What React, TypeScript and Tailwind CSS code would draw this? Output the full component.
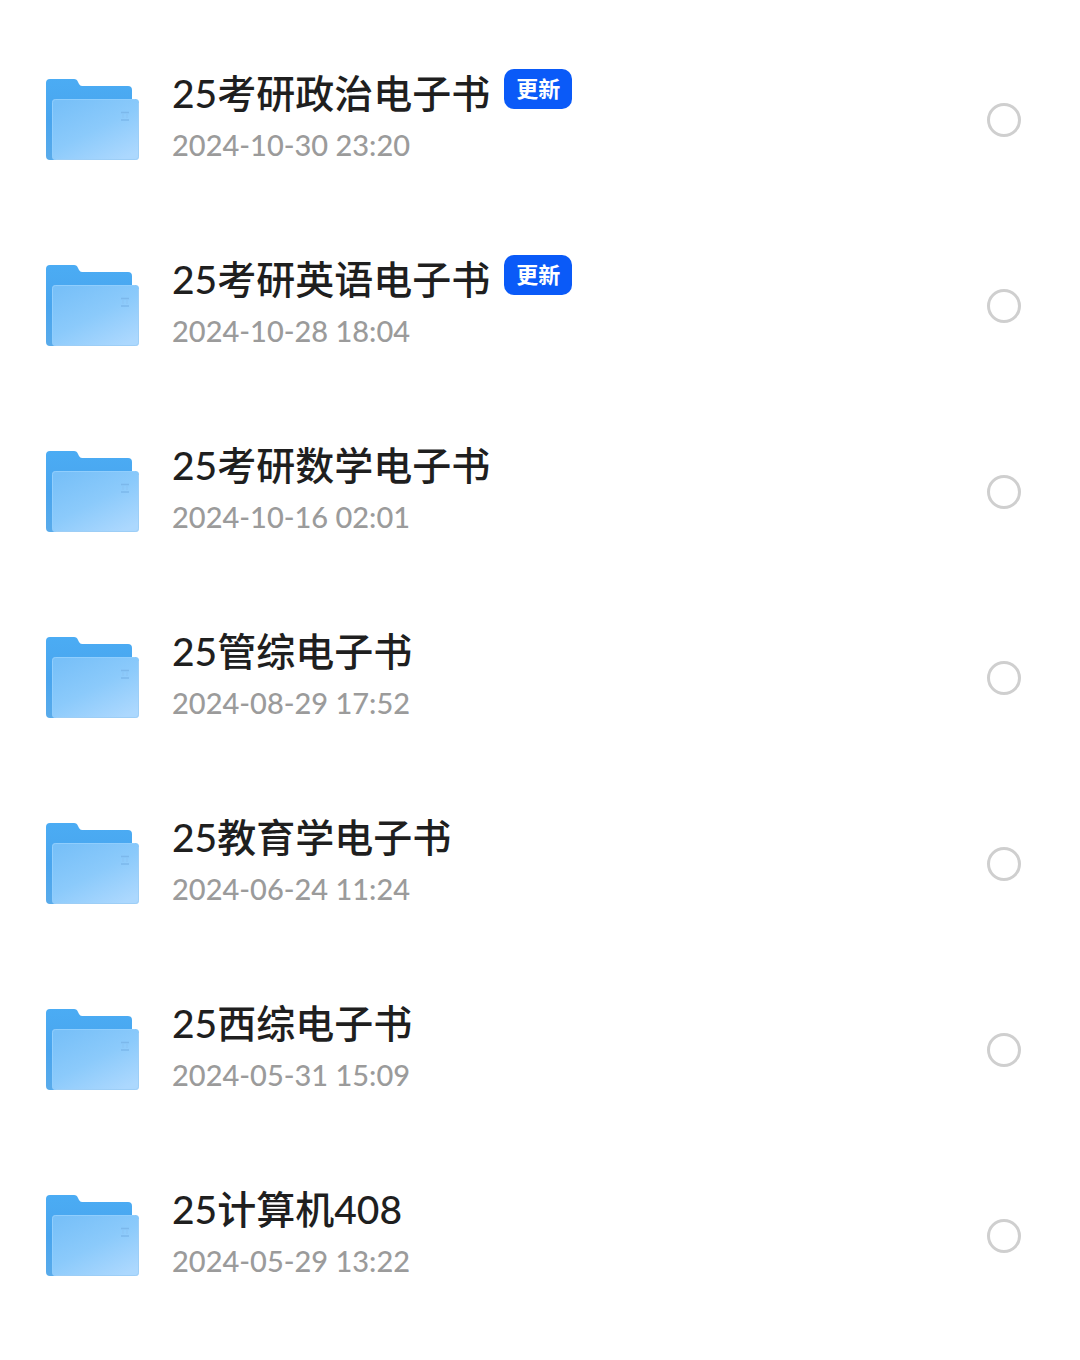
import { useState } from "react";

const FOLDERS = [
  { name: "25考研政治电子书", date: "2024-10-30 23:20", updated: true },
  { name: "25考研英语电子书", date: "2024-10-28 18:04", updated: true },
  { name: "25考研数学电子书", date: "2024-10-16 02:01" },
  { name: "25管综电子书", date: "2024-08-29 17:52" },
  { name: "25教育学电子书", date: "2024-06-24 11:24" },
  { name: "25西综电子书", date: "2024-05-31 15:09" },
  { name: "25计算机408", date: "2024-05-29 13:22" },
];

function FolderIcon() {
  return (
    <svg className="w-24 h-[84px] shrink-0" viewBox="0 0 96 84" fill="none" aria-hidden="true">
      <defs>
        <linearGradient id="folder-back" x1="0" y1="0" x2="0" y2="84" gradientUnits="userSpaceOnUse">
          <stop stopColor="#4bacf4" />
          <stop offset="0.5" stopColor="#49a5ee" />
          <stop offset="1" stopColor="#5aabea" />
        </linearGradient>
        <linearGradient id="folder-front" x1="30" y1="18" x2="66" y2="88" gradientUnits="userSpaceOnUse">
          <stop stopColor="#78c0f8" />
          <stop offset="0.5" stopColor="#8bcafb" />
          <stop offset="1" stopColor="#acd8fe" />
        </linearGradient>
      </defs>
      <path
        d="M2 5q0-4 4-4h24q3 0 4 3l1 2q1 2 3 2h46q4 0 4 4v30L10 82H6q-4 0-4-4z"
        fill="url(#folder-back)"
      />
      <rect x="8" y="21" width="87" height="61" rx="3.500" fill="url(#folder-front)" />
      <path d="M8.500 78V24.500q0-3 3-3H91" stroke="#90cefd" strokeWidth="1" />
      <path d="M12 81.500h79.500q3 0 3-3V25" stroke="#9dcef6" strokeWidth="1" />
      <path d="M77 34.500h8M77 42h8" stroke="#7cb8eb" strokeWidth="1.500" />
      <path d="M79 36v4M83 36v4" stroke="#8ac3f3" strokeWidth="1" />
    </svg>
  );
}

export default function App() {
  const [selected, setSelected] = useState<string[]>([]);

  const toggle = (name: string) => {
    setSelected((prev) => (prev.includes(name) ? prev.filter((n) => n !== name) : [...prev, name]));
  };

  return (
    <main className="min-h-screen bg-white pt-[27px] font-['Lato','Noto_Sans_CJK_SC',sans-serif]">
      <ul>
        {FOLDERS.map((folder) => (
          <li key={folder.name}>
            <label className="flex items-center h-[186px] pl-11 pr-[59px] cursor-pointer">
              <FolderIcon />
              <div className="ml-8 pb-1.5 flex-1 min-w-0">
                <div className="flex items-center gap-3.5">
                  <span className="text-[39px] leading-[56px] font-medium text-[#1f1f1f]">{folder.name}</span>
                  {folder.updated && (
                    <span className="h-10 px-3 mb-2 flex items-center rounded-[10px] bg-[#0a5af8] text-[22px] leading-none font-bold text-white">
                      更新
                    </span>
                  )}
                </div>
                <div className="text-[29px] leading-[48px] font-medium text-[#9b9b9b]">{folder.date}</div>
              </div>
              <input
                type="checkbox"
                checked={selected.includes(folder.name)}
                onChange={() => toggle(folder.name)}
                className="appearance-none size-[34px] shrink-0 rounded-full border-[3px] border-[#cfcfcf] checked:border-[#0a5af8] checked:bg-[#0a5af8]"
              />
            </label>
          </li>
        ))}
      </ul>
    </main>
  );
}
